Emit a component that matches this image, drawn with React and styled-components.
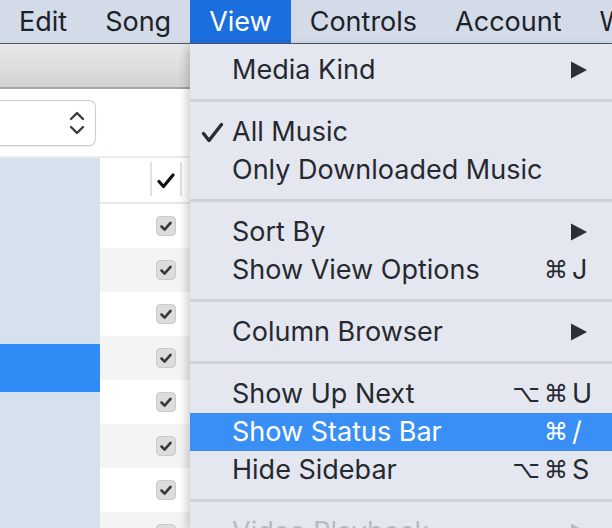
import React from "react";
import styled, { createGlobalStyle } from "styled-components";

const GlobalStyle = createGlobalStyle`
  html, body { margin: 0; padding: 0; background: #ffffff; }
  body { width: 612px; height: 528px; overflow: hidden; font-family: Inter, "Liberation Sans", "DejaVu Sans", sans-serif; }
  * { box-sizing: border-box; }
`;

const Screen = styled.div`
  position: relative;
  width: 612px;
  height: 528px;
  overflow: hidden;
  display: flex;
  flex-direction: column;
`;

const MenuBar = styled.div`
  flex-shrink: 0;
  height: 44px;
  display: flex;
  align-items: stretch;
  background: #d3dbe9;
  border-bottom: 1px solid #4f5563;
  overflow: hidden;
`;

const MenuTitle = styled.div`
  flex-shrink: 0;
  padding: 0 19px;
  font-size: 27px;
  line-height: 43px;
  white-space: nowrap;
  color: ${(p) => (p.$active ? "#ffffff" : "#1d212a")};
  background: ${(p) => (p.$active ? "#1b6ede" : "transparent")};
`;

const Window = styled.div`
  flex: 1;
  display: flex;
  flex-direction: column;
  min-height: 0;
`;

const Toolbar = styled.div`
  flex-shrink: 0;
  height: 45px;
  background: linear-gradient(#e9e9e9, #d3d3d3);
  border-bottom: 2px solid #a4a4a4;
`;

const FilterBar = styled.div`
  flex-shrink: 0;
  height: 69px;
  padding-top: 11px;
  background: #ffffff;
  border-bottom: 2px solid #ececec;
`;

const PopUp = styled.div`
  width: 96px;
  height: 46px;
  display: flex;
  align-items: center;
  justify-content: flex-end;
  padding-right: 10px;
  background: #ffffff;
  border: 1px solid #cfcfcf;
  border-left: none;
  border-radius: 0 7px 7px 0;
  box-shadow: 0 1px 1px rgba(0, 0, 0, 0.08);
`;

const Body = styled.div`
  flex: 1;
  display: flex;
  min-height: 0;
`;

const Sidebar = styled.div`
  width: 100px;
  flex-shrink: 0;
  background: #d7e0ee;
  padding-top: 186px;
`;

const SidebarRow = styled.div`
  height: 48px;
  background: ${(p) => (p.$selected ? "#2f8cf6" : "transparent")};
`;

const List = styled.div`
  flex: 1;
  display: flex;
  flex-direction: column;
  background: #ffffff;
`;

const ListHeader = styled.div`
  flex-shrink: 0;
  height: 46px;
  display: flex;
  align-items: stretch;
  padding: 4px 0 6px 50px;
  border-bottom: 2px solid #e8e8e8;
`;

const HeaderCell = styled.div`
  width: 32px;
  display: flex;
  align-items: center;
  justify-content: center;
  padding-top: 4px;
  border-left: 2px solid #e2e2e2;
  border-right: 2px solid #e2e2e2;
`;

const Row = styled.div`
  flex-shrink: 0;
  height: 44px;
  display: flex;
  align-items: center;
  padding-left: 56px;
  background: ${(p) => (p.$alt ? "#f4f4f4" : "#ffffff")};
`;

const Menu = styled.div`
  position: absolute;
  left: 190px;
  top: 44px;
  right: 0;
  bottom: 0;
  padding-top: 7px;
  background: #e4e7ef;
  box-shadow: -3px 2px 9px rgba(0, 0, 0, 0.2);
  display: flex;
  flex-direction: column;
`;

const Item = styled.div`
  flex-shrink: 0;
  height: 38px;
  display: flex;
  align-items: center;
  padding-right: 16px;
  font-size: 27px;
  line-height: 38px;
  white-space: nowrap;
  color: ${(p) => (p.$highlight ? "#ffffff" : p.$disabled ? "#b6b9c1" : "#262930")};
  background: ${(p) => (p.$highlight ? "#3a8ff6" : "transparent")};
`;

const CheckCell = styled.div`
  width: 43px;
  flex-shrink: 0;
  display: flex;
  align-items: center;
  padding-left: 11px;
`;

const Label = styled.div`
  flex: 1;
  margin-left: -1px;
`;

const Mods = styled.span`
  width: 64px;
  text-align: right;
  font-family: "DejaVu Sans", sans-serif;
  font-size: 24px;
  letter-spacing: 4px;
`;

const Key = styled.span`
  width: 24px;
  display: flex;
  align-items: center;
`;

const Separator = styled.div`
  flex-shrink: 0;
  height: 3px;
  margin: 10px 0 11px;
  background: #cfd2da;
`;

const Chevrons = () => (
  <svg width="16" height="24" viewBox="0 0 16 24" fill="none" stroke="#3d3d3d" strokeWidth="2.4" strokeLinecap="round" strokeLinejoin="round">
    <path d="M2 8 L8 2 L14 8" />
    <path d="M2 16 L8 22 L14 16" />
  </svg>
);

const CheckBox = () => (
  <svg width="20" height="20" viewBox="0 0 20 20">
    <rect x="0.5" y="0.5" width="19" height="19" rx="4" fill="#dcdcdc" stroke="#c9c9c9" />
    <path d="M5.5 10.5 L8.6 13.6 L14.5 6.8" fill="none" stroke="#393939" strokeWidth="2.6" strokeLinecap="round" strokeLinejoin="round" />
  </svg>
);

const HeaderCheck = () => (
  <svg width="18" height="16" viewBox="0 0 18 16" fill="none" stroke="#111111" strokeWidth="3.2" strokeLinecap="round" strokeLinejoin="round">
    <path d="M2 8.5 L6.5 13.5 L16 2" />
  </svg>
);

const MenuCheck = () => (
  <svg width="23" height="21" viewBox="0 0 23 21" fill="none" stroke="#2a2d34" strokeWidth="3.4" strokeLinecap="round" strokeLinejoin="round">
    <path d="M2.5 11.5 L8 18.5 L20.5 2.5" />
  </svg>
);

const Arrow = ({ color }) => (
  <svg width="18" height="18" viewBox="0 0 18 18" style={{ marginLeft: -2 }}>
    <path d="M1 0.5 L17 9 L1 17.5 Z" fill={color} />
  </svg>
);

const Shortcut = ({ mods, keyChar }) => (
  <>
    <Mods>{mods}</Mods>
    <Key>{keyChar}</Key>
  </>
);

const menuModel = [
  { label: "Media Kind", submenu: true },
  { sep: true },
  { label: "All Music", checked: true },
  { label: "Only Downloaded Music" },
  { sep: true },
  { label: "Sort By", submenu: true },
  { label: "Show View Options", mods: "⌘", keyChar: "J" },
  { sep: true },
  { label: "Column Browser", submenu: true },
  { sep: true },
  { label: "Show Up Next", mods: "⌥⌘", keyChar: "U" },
  { label: "Show Status Bar", mods: "⌘", keyChar: "/", highlight: true },
  { label: "Hide Sidebar", mods: "⌥⌘", keyChar: "S" },
  { sep: true },
  { label: "Video Playback", submenu: true, disabled: true },
];

export default function App() {
  return (
    <>
      <GlobalStyle />
      <Screen>
        <MenuBar>
          <MenuTitle>Edit</MenuTitle>
          <MenuTitle>Song</MenuTitle>
          <MenuTitle $active>View</MenuTitle>
          <MenuTitle>Controls</MenuTitle>
          <MenuTitle>Account</MenuTitle>
          <MenuTitle>Window</MenuTitle>
        </MenuBar>
        <Window>
          <Toolbar />
          <FilterBar>
            <PopUp>
              <Chevrons />
            </PopUp>
          </FilterBar>
          <Body>
            <Sidebar>
              <SidebarRow $selected />
            </Sidebar>
            <List>
              <ListHeader>
                <HeaderCell>
                  <HeaderCheck />
                </HeaderCell>
              </ListHeader>
              {Array.from({ length: 8 }).map((_, i) => (
                <Row key={i} $alt={i % 2 === 1}>
                  <CheckBox />
                </Row>
              ))}
            </List>
          </Body>
        </Window>
        <Menu>
          {menuModel.map((m, i) =>
            m.sep ? (
              <Separator key={i} />
            ) : (
              <Item key={i} $highlight={m.highlight} $disabled={m.disabled}>
                <CheckCell>{m.checked ? <MenuCheck /> : null}</CheckCell>
                <Label>{m.label}</Label>
                {m.submenu ? (
                  <>
                    <Mods />
                    <Key>
                      <Arrow color={m.disabled ? "#b6b9c1" : "#2c2f36"} />
                    </Key>
                  </>
                ) : m.mods ? (
                  <Shortcut mods={m.mods} keyChar={m.keyChar} />
                ) : null}
              </Item>
            )
          )}
        </Menu>
      </Screen>
    </>
  );
}
